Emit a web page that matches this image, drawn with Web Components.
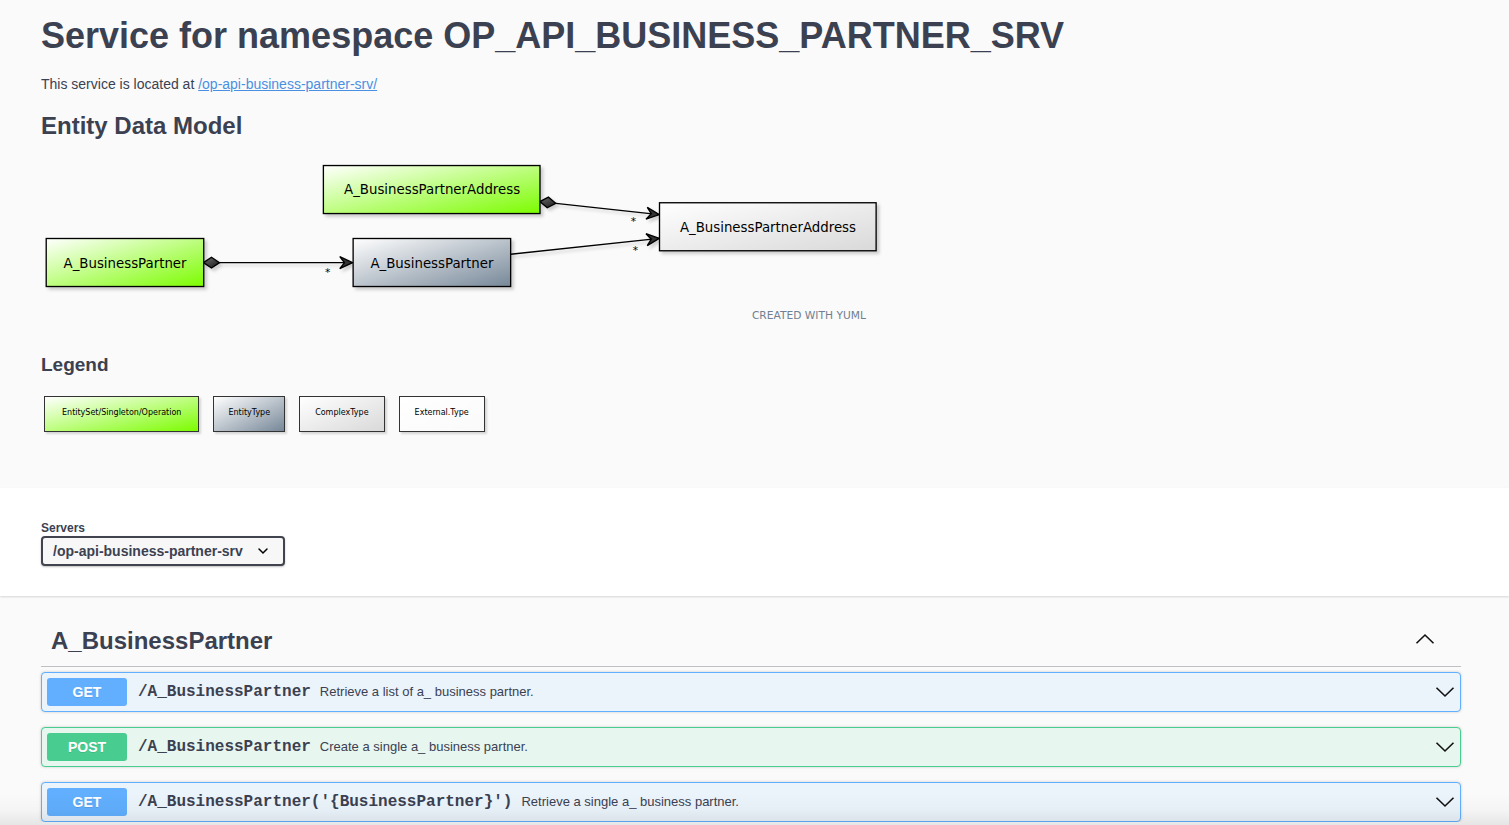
<!DOCTYPE html>
<html lang="en">
<head>
<meta charset="utf-8">
<meta name="viewport" content="width=device-width, initial-scale=1">
<title>OP_API_BUSINESS_PARTNER_SRV</title>
<style>
  body {
    margin: 0;
    background: #fafafa;
    color: #3b4151;
    font-family: "Liberation Sans", Arial, Helvetica, sans-serif;
  }
</style>
</head>
<body>
<service-page></service-page>

<template id="service-page">
  <style>
    :host { display: block; }
    .wrap { padding: 0 48px 0 41px; }
    .tags { padding-top: 31px; }
    .fade {
      position: fixed; left: 0; right: 0; bottom: 0; height: 32px; pointer-events: none;
      background: linear-gradient(rgba(0,0,0,0), rgba(0,0,0,.02) 50%, rgba(0,0,0,.08));
    }
  </style>
  <main>
    <service-info class="wrap">
      <span slot="title">Service for namespace OP_API_BUSINESS_PARTNER_SRV</span>
      <span slot="description">This service is located at <a href="/op-api-business-partner-srv/" style="color:#4990e2">/op-api-business-partner-srv/</a></span>
      <entity-diagram slot="model"></entity-diagram>
      <legend-item slot="legend" kind="set">EntitySet/Singleton/Operation</legend-item>
      <legend-item slot="legend" kind="entity">EntityType</legend-item>
      <legend-item slot="legend" kind="complex">ComplexType</legend-item>
      <legend-item slot="legend" kind="external">External.Type</legend-item>
    </service-info>
    <server-picker></server-picker>
    <div class="wrap tags">
      <tag-section>
        <span slot="name">A_BusinessPartner</span>
        <api-operation method="get">
          <span slot="path">/A_BusinessPartner</span>
          <span slot="summary">Retrieve a list of a_ business partner.</span>
        </api-operation>
        <api-operation method="post">
          <span slot="path">/A_BusinessPartner</span>
          <span slot="summary">Create a single a_ business partner.</span>
        </api-operation>
        <api-operation method="get">
          <span slot="path">/A_BusinessPartner('{BusinessPartner}')</span>
          <span slot="summary">Retrieve a single a_ business partner.</span>
        </api-operation>
      </tag-section>
    </div>
  </main>
  <div class="fade"></div>
</template>

<template id="service-info">
  <style>
    :host { display: block; padding-top: 15px !important; padding-bottom: 56px !important; }
    h1, h2, h3, p { margin: 0; }
    h1 { font-size: 36px; line-height: 42px; }
    p { margin-top: 17px; font-size: 14px; line-height: 20px; }
    h2 { margin-top: 18px; font-size: 24px; line-height: 28px; }
    .model { margin-top: 17px; }
    h3 { margin-top: 29px; font-size: 19px; line-height: 22px; }
    .legend { display: flex; flex-wrap: wrap; gap: 14px; margin: 20px 0 0 3px; }
  </style>
  <h1><slot name="title"></slot></h1>
  <p><slot name="description"></slot></p>
  <h2>Entity Data Model</h2>
  <div class="model"><slot name="model"></slot></div>
  <h3>Legend</h3>
  <div class="legend"><slot name="legend"></slot></div>
</template>

<template id="legend-item">
  <style>
    :host {
      display: block; box-sizing: border-box; height: 36px; padding: 0 15px;
      border: 1px solid #333; box-shadow: 2px 2px 2px rgba(0,0,0,.15);
      font: 8px/31px "DejaVu Sans", Verdana, sans-serif; color: #000;
      background: linear-gradient(to bottom right, #fff, #fafafa);
    }
    :host([kind="set"]) { background: linear-gradient(to bottom right, #fff, #7cfc00); padding: 0 17px; }
    :host([kind="entity"]) { background: linear-gradient(to bottom right, #fff, #778899); padding: 0 14px; }
    :host([kind="complex"]) { background: linear-gradient(to bottom right, #fff, #d9d9d9); }
  </style>
  <slot></slot>
</template>

<template id="entity-diagram">
  <style>
    :host { display: block; }
    svg { display: block; width: 847px; max-width: 100%; height: auto; overflow: visible; }
    text { font-family: "DejaVu Sans", Verdana, sans-serif; font-size: 10px; fill: #000; text-anchor: middle; }
    .small { font-size: 8px; }
    .credit { fill: #708090; text-anchor: start; }
    .cast { filter: drop-shadow(2px 2px 1px rgba(0,0,0,.18)); }
  </style>
  <svg viewBox="0 0 635 126" role="img" aria-label="Entity data model">
    <defs>
      <linearGradient id="green" x1="0" y1="0" x2="1" y2="1"><stop stop-color="#fff"/><stop offset="1" stop-color="#7cfc00"/></linearGradient>
      <linearGradient id="slate" x1="0" y1="0" x2="1" y2="1"><stop stop-color="#fff"/><stop offset="1" stop-color="#778899"/></linearGradient>
      <linearGradient id="grey" x1="0" y1="0" x2="1" y2="1"><stop stop-color="#fff"/><stop offset="1" stop-color="#d9d9d9"/></linearGradient>
      <linearGradient id="dark" x1="0" y1="0" x2="1" y2="1"><stop stop-color="#777"/><stop offset="1" stop-color="#111"/></linearGradient>
      <marker id="vee" markerUnits="userSpaceOnUse" markerWidth="14" markerHeight="12" refX="11" refY="6" orient="auto" overflow="visible">
        <path d="M11 6 1.500 1.500 5 6 1.500 10.500Z" fill="#333" stroke="#000"/>
      </marker>
      <marker id="diamond" markerUnits="userSpaceOnUse" markerWidth="14" markerHeight="12" refX="0" refY="6" orient="auto" overflow="visible">
        <path d="M0 6 6 2 12 6 6 10Z" fill="url(#dark)" stroke="#000"/>
      </marker>
    </defs>
    <g class="cast" stroke="#000" fill="none">
      <path d="M121.800 79.200H233.500" marker-start="url(#diamond)" marker-end="url(#vee)"/>
      <path d="M374 33.400 463.500 43.200" marker-start="url(#diamond)" marker-end="url(#vee)"/>
      <path d="M352.100 72.900 463.500 61" marker-end="url(#vee)"/>
    </g>
    <g class="cast" stroke="#000">
      <rect x="3.900" y="61.100" width="118.100" height="36" fill="url(#green)"/>
      <rect x="211.700" y="6.400" width="162.400" height="36" fill="url(#green)"/>
      <rect x="234" y="61.100" width="118.100" height="36" fill="url(#slate)"/>
      <rect x="463.700" y="34.300" width="162.400" height="36" fill="url(#grey)"/>
    </g>
    <text x="63" y="83.300">A_BusinessPartner</text>
    <text x="293.200" y="27.800">A_BusinessPartnerAddress</text>
    <text x="293.100" y="83.300">A_BusinessPartner</text>
    <text x="545" y="56.200">A_BusinessPartnerAddress</text>
    <text class="small" x="215" y="89.500">*</text>
    <text class="small" x="444.200" y="51.300">*</text>
    <text class="small" x="445.600" y="73">*</text>
    <text class="small credit" x="533" y="121.500">CREATED WITH YUML</text>
  </svg>
</template>

<template id="server-picker">
  <style>
    :host {
      display: block; padding: 33px 48px 30px 41px; background: #fff;
      box-shadow: 0 1px 2px rgba(0,0,0,.15);
    }
    label { display: block; font-size: 12px; line-height: 14px; font-weight: 700; margin-bottom: 1px; }
    .box { position: relative; display: inline-block; vertical-align: top; }
    select {
      display: block; appearance: none; width: 244px; height: 30px; margin: 0; padding: 0 40px 0 10px;
      border: 2px solid #41444e; border-radius: 4px; background: #f7f7f7;
      box-shadow: 0 1px 2px rgba(0,0,0,.25);
      font: 700 14px "Liberation Sans", Arial, sans-serif; color: #3b4151;
    }
    svg { position: absolute; right: 16px; top: 10px; pointer-events: none; }
  </style>
  <label for="server">Servers</label>
  <div class="box">
    <select id="server"><option>/op-api-business-partner-srv</option></select>
    <svg width="12" height="10" viewBox="0 0 12 10"><path d="M2 3 6 7 10 3" fill="none" stroke="#000" stroke-width="1.500" stroke-linecap="round"/></svg>
  </div>
</template>

<template id="tag-section">
  <style>
    :host { display: block; }
    header {
      display: flex; align-items: center; padding: 0 26px 11px 10px;
      border-bottom: 1px solid #bfc0c3;
    }
    h2 { flex: 1; margin: 0; font-size: 24px; line-height: 28px; }
    button { padding: 0; border: 0; background: none; }
    svg { display: block; margin-bottom: 4px; }
    .list { display: grid; gap: 15px; padding-top: 5px; }
  </style>
  <header>
    <h2><slot name="name"></slot></h2>
    <button type="button" aria-label="Collapse section"><svg width="20" height="12" viewBox="0 0 20 12"><path d="M1.500 10.300 10 2 18.500 10.300" fill="none" stroke="#111" stroke-width="1.600"/></svg></button>
  </header>
  <div class="list"><slot></slot></div>
</template>

<template id="api-operation">
  <style>
    :host { display: block; --tone: #61affe; --wash: #ebf3fb; }
    :host([method="post"]) { --tone: #49cc90; --wash: #e8f6f0; }
    button {
      display: flex; align-items: center; box-sizing: border-box; width: 100%; height: 40px;
      margin: 0; padding: 0 5px; border: 1px solid var(--tone); border-radius: 4px;
      background: var(--wash); box-shadow: 0 0 3px rgba(0,0,0,.19);
      color: #3b4151; text-align: left; font: 13px/16px "Liberation Sans", Arial, sans-serif;
    }
    .method {
      width: 80px; border-radius: 3px; background: var(--tone); color: #fff;
      font-size: 14px; line-height: 28px; font-weight: 700; text-align: center;
      text-shadow: 0 1px 0 rgba(0,0,0,.1);
    }
    .path { margin: 0 9px 0 11px; font: 700 16px/18px "Liberation Mono", "Courier New", monospace; }
    .summary { flex: 1; }
  </style>
  <button type="button" aria-expanded="false">
    <span class="method"></span>
    <span class="path"><slot name="path"></slot></span>
    <span class="summary"><slot name="summary"></slot></span>
    <svg width="20" height="12" viewBox="0 0 20 12"><path d="M1.500 1.700 10 10 18.500 1.700" fill="none" stroke="#111" stroke-width="1.600"/></svg>
  </button>
</template>

<script>
  class TemplateElement extends HTMLElement {
    constructor() {
      super();
      const template = document.getElementById(this.localName);
      this.attachShadow({ mode: "open" }).append(template.content.cloneNode(true));
    }
  }
  class LegendItem extends TemplateElement {}
  class EntityDiagram extends TemplateElement {}
  class ServerPicker extends TemplateElement {}
  class ServiceInfo extends TemplateElement {}
  class TagSection extends TemplateElement {}
  class ServicePage extends TemplateElement {}
  class ApiOperation extends TemplateElement {
    connectedCallback() {
      this.shadowRoot.querySelector(".method").textContent = this.getAttribute("method").toUpperCase();
    }
  }
  customElements.define("legend-item", LegendItem);
  customElements.define("entity-diagram", EntityDiagram);
  customElements.define("server-picker", ServerPicker);
  customElements.define("api-operation", ApiOperation);
  customElements.define("tag-section", TagSection);
  customElements.define("service-info", ServiceInfo);
  customElements.define("service-page", ServicePage);
</script>
</body>
</html>
